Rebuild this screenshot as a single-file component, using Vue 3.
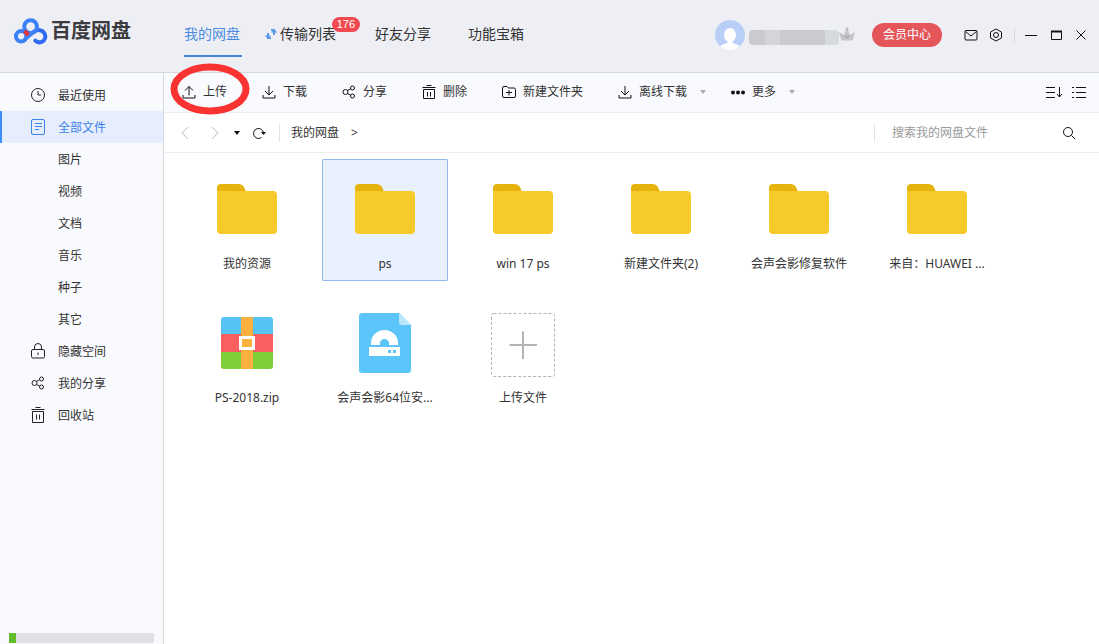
<template>
  <div class="app">
    <header class="header">
      <div class="brand">
        <svg class="brand-logo" viewBox="0 0 34 27" fill="none" stroke-linecap="round">
          <circle cx="7.2" cy="18.3" r="5.2" stroke="#3b80f7" stroke-width="4" />
          <path d="M20.5 13.5C24 11 28.5 12 30.4 15.2C32.3 18.5 31 22.5 27.8 23.8C25.4 24.8 22.8 24.2 21.3 22.6" stroke="#2f6af0" stroke-width="4" />
          <path d="M11.5 20.5L20.5 13.5" stroke="#3b80f7" stroke-width="4" />
          <circle cx="16.6" cy="8.6" r="6.4" stroke="#3b80f7" stroke-width="4" />
          <path d="M10.5 13L14.5 17" stroke="#e5343a" stroke-width="4" stroke-linecap="butt" />
        </svg>
        <span class="brand-name">百度网盘</span>
      </div>

      <nav class="tabs">
        <a href="#" class="tab active">我的网盘</a>
        <a href="#" class="tab tab-transfer">
          <svg class="transfer-icon" viewBox="0 0 12 12" fill="none" stroke="#5b9bea" stroke-width="2">
            <path d="M6 10H3V5M6 2H9V7" />
            <path d="M0 7.500H6L3 11.500ZM6 4.500H12L9 .5Z" fill="#5b9bea" stroke="none" />
          </svg>
          传输列表
          <span class="badge">176</span>
        </a>
        <a href="#" class="tab">好友分享</a>
        <a href="#" class="tab">功能宝箱</a>
      </nav>

      <div class="account">
        <svg class="avatar" viewBox="0 0 30 30">
          <circle cx="15" cy="15" r="15" fill="#b9cff8" />
          <path d="M5 26.200C7 24 10 24 12.500 23V20.500H17.500V23C20 24 23 24 25 26.200A15 15 0 0 1 5 26.200Z" fill="#fff" />
          <ellipse cx="15" cy="15" rx="6" ry="7" fill="#fff" />
        </svg>
        <span class="user-name"></span>
        <svg class="crown" viewBox="0 0 16 16">
          <path d="M2.500 13.500L0 5L5 8L8 1L11 8L16 5L13.500 13.500Z" fill="#c3c5c8" />
          <circle cx="8" cy="2" r="1.500" fill="#b7b9bc" />
          <path d="M5.500 8L8 11L10.500 8" fill="none" stroke="#9fa2a6" />
        </svg>
      </div>
      <button class="vip-button">会员中心</button>

      <div class="window-tools">
        <button class="icon-button" aria-label="消息">
          <svg class="icon" viewBox="0 0 14 14"><path d="M2 2.500H12Q13 2.500 13 3.500V11Q13 12 12 12H2Q1 12 1 11V3.500Q1 2.500 2 2.500ZM1.500 3.500L7 8L12.500 3.500" /></svg>
        </button>
        <button class="icon-button" aria-label="设置">
          <svg class="icon" viewBox="0 0 14 14"><path d="M7 1L12.500 4V10L7 13L1.500 10V4Z" /><circle cx="7" cy="7" r="2.500" /></svg>
        </button>
      </div>
      <div class="window-controls">
        <button class="icon-button" aria-label="最小化">
          <svg class="icon" viewBox="0 0 14 14"><path d="M1 7.500H13" /></svg>
        </button>
        <button class="icon-button" aria-label="最大化">
          <svg class="icon" viewBox="0 0 14 14"><path d="M2.500 3.500H12.500V11.500H2.500Z" /><path d="M2 3.500H13" stroke-width="2" /></svg>
        </button>
        <button class="icon-button" aria-label="关闭">
          <svg class="icon" viewBox="0 0 14 14"><path d="M2.500 2.500L11.500 11.500M11.500 2.500L2.500 11.500" /></svg>
        </button>
      </div>
    </header>

    <div class="body">
      <aside class="sidebar">
        <nav class="side-nav">
          <a
            v-for="item in sideItems"
            :key="item.label"
            href="#"
            class="side-item"
            :class="{ active: item.label === current }"
            @click.prevent="current = item.label"
          >
            <svg class="side-icon" viewBox="0 0 16 16">
              <path v-if="item.icon" :d="icons[item.icon]" />
            </svg>
            <span class="side-label">{{ item.label }}</span>
          </a>
        </nav>
        <div class="quota">
          <div class="quota-used" :style="{ width: usedPercent + '%' }"></div>
        </div>
      </aside>

      <main class="main">
        <div class="toolbar">
          <button
            v-for="action in actions"
            :key="action.label"
            class="action"
            :class="{ dropdown: action.dropdown }"
          >
            <svg class="icon" viewBox="0 0 14 14"><path :d="icons[action.icon]" :class="{ dots: action.icon === 'more' }" /></svg>
            <span>{{ action.label }}</span>
            <svg v-if="action.dropdown" class="caret" viewBox="0 0 6 4"><path d="M0 0H6L3 4Z" /></svg>
            <svg v-if="action.marked" class="marker" viewBox="0 0 82 52">
              <ellipse cx="41" cy="26" rx="36" ry="22" />
            </svg>
          </button>
          <div class="view-tools">
            <button class="icon-button" aria-label="排序">
              <svg class="icon wide" viewBox="0 0 18 14"><path d="M1 2.500H10M1 7.500H10M1 12.500H10M14.500 2V12M12 9L14.500 12L17 9" /></svg>
            </button>
            <button class="icon-button" aria-label="列表">
              <svg class="icon" viewBox="0 0 14 14"><path d="M4 2.500H14M4 7.500H14M4 12.500H14M0 2.500H2M0 7.500H2M0 12.500H2" /></svg>
            </button>
          </div>
        </div>

        <div class="pathbar">
          <div class="history">
            <button class="icon-button faded" aria-label="后退">
              <svg class="icon" viewBox="0 0 14 14"><path d="M10 1L4 7L10 13" /></svg>
            </button>
            <button class="icon-button faded" aria-label="前进">
              <svg class="icon" viewBox="0 0 14 14"><path d="M4 1L10 7L4 13" /></svg>
            </button>
            <button class="icon-button" aria-label="历史">
              <svg class="caret dark" viewBox="0 0 6 4"><path d="M0 0H6L3 4Z" /></svg>
            </button>
            <button class="icon-button" aria-label="刷新">
              <svg class="icon" viewBox="0 0 14 14"><path d="M9.500 11.500A5 5 0 1 1 11.500 7" /><path d="M9 6H14L11.500 9Z" fill="#111" stroke="none" /></svg>
            </button>
          </div>
          <nav class="crumbs">
            <a href="#">我的网盘</a>
            <span>&gt;</span>
          </nav>
          <form class="search" @submit.prevent>
            <input v-model="keyword" type="text" placeholder="搜索我的网盘文件" aria-label="搜索我的网盘文件" />
            <button class="icon-button" aria-label="搜索">
              <svg class="icon" viewBox="0 0 14 14"><circle cx="6" cy="6" r="4.500" /><path d="M9.500 9.500L13 13" /></svg>
            </button>
          </form>
        </div>

        <div class="files">
          <button
            v-for="file in files"
            :key="file.name"
            class="file"
            :class="{ selected: file.name === selected }"
            @click="selected = file.name"
          >
            <svg v-if="file.type === 'folder'" class="file-icon" viewBox="0 0 64 64">
              <path d="M2 14V9Q2 5 6 5H23Q27 5 29 8L31 13V18H2Z" fill="#e6b30c" />
              <path d="M2 12H58Q62 12 62 16V51Q62 55 58 55H6Q2 55 2 51Z" fill="#f7ca2c" />
            </svg>
            <svg v-else-if="file.type === 'zip'" class="file-icon" viewBox="0 0 64 64">
              <path d="M9 4H55Q58 4 58 7V21H6V7Q6 4 9 4Z" fill="#55c4f5" />
              <path d="M6 21H58V39H6Z" fill="#fa5f5f" />
              <path d="M6 39H58V53Q58 56 55 56H9Q6 56 6 53Z" fill="#7fcf3a" />
              <path d="M26 4H38V56H26Z" fill="#fbb040" />
              <path d="M25.500 24.500H38.500V35.500H25.500Z" fill="#fbb040" stroke="#fff" stroke-width="3" />
            </svg>
            <svg v-else-if="file.type === 'disk'" class="file-icon" viewBox="0 0 64 64">
              <path d="M9 0H46L58 12V57Q58 60 55 60H9Q6 60 6 57V3Q6 0 9 0Z" fill="#5bc5fa" />
              <path d="M46 0L58 12H48Q46 12 46 10Z" fill="#b9e6fd" />
              <path d="M18 32V30A13.500 13 0 0 1 45 30V32H36V30A4.500 4 0 0 0 27 30V32Z" fill="#fff" />
              <path d="M16 34H47V43H16Z" fill="#fff" />
              <path d="M35 37H38V40H35ZM40 37H43V40H40Z" fill="#5bc5fa" />
            </svg>
            <svg v-else class="file-icon" viewBox="0 0 64 64" fill="none">
              <rect x=".5" y=".5" width="63" height="63" rx="2" stroke="#b4b4b4" stroke-dasharray="3 2" />
              <path d="M32 18.500V46M18.500 32H46" stroke="#b4b4b4" stroke-width="2" />
            </svg>
            <span class="file-name">{{ file.name }}</span>
          </button>
        </div>
      </main>
    </div>
  </div>
</template>

<script setup>
import { ref } from 'vue';

const current = ref('全部文件');
const selected = ref('ps');
const keyword = ref('');
const usedPercent = ref(5);

const icons = {
  upload: 'M1 10V13H13V10M7 10.500V1.500M3 5.500L7 1.500L11 5.500',
  download: 'M1 10V13H13V10M7 1V10M3 6L7 10L11 6',
  share: 'M1 7A2.500 2.500 0 1 0 6 7A2.500 2.500 0 1 0 1 7M8.500 3A2 2 0 1 0 12.500 3A2 2 0 1 0 8.500 3M8.500 11A2 2 0 1 0 12.500 11A2 2 0 1 0 8.500 11M5.500 5.500L8.700 3.800M5.500 8.500L8.700 10.200',
  trash: 'M4.500 .5H9.500M.5 2.500H13.500M1.500 4.500H12.500V13.500H1.500ZM5.500 7V11.500M8.500 7V11.500',
  newFolder: 'M.5 3Q.5 1.500 2 1.500H5L6.500 3H12Q13.500 3 13.500 4.500V11Q13.500 12.500 12 12.500H2Q.5 12.500 .5 11ZM7 5V10.500M4 7.500H10',
  more: 'M2 7.500H2M7 7.500H7M12 7.500H12',
  clock: 'M1.500 8A6.500 6.500 0 1 0 14.500 8A6.500 6.500 0 1 0 1.500 8M8 4V8H11',
  doc: 'M3 .5H13Q14.500 .5 14.500 2V14Q14.500 15.500 13 15.500H3Q1.500 15.500 1.500 14V2Q1.500 .5 3 .5ZM5 4.500H12M5 7.500H12M5 10.500H9',
  lock: 'M3 6.500H13Q14.500 6.500 14.500 8V13.500Q14.500 15 13 15H3Q1.500 15 1.500 13.500V8Q1.500 6.500 3 6.500ZM4.500 6.500V4A3.500 3.500 0 0 1 11.500 4V6.500M8 9.500V12',
  nodes: 'M2 8A2.500 2.500 0 1 0 7 8A2.500 2.500 0 1 0 2 8M9.500 4A2 2 0 1 0 13.500 4A2 2 0 1 0 9.500 4M9.500 12A2 2 0 1 0 13.500 12A2 2 0 1 0 9.500 12M6.500 6.500L9.700 4.800M6.500 9.500L9.700 11.200',
  bin: 'M5.500 .5H10.500M1.500 2.500H14.500M2.500 4.500H13.500V15.500H2.500ZM6.500 7.500V12.500M9.500 7.500V12.500'
};

const sideItems = [
  { label: '最近使用', icon: 'clock' },
  { label: '全部文件', icon: 'doc' },
  { label: '图片' },
  { label: '视频' },
  { label: '文档' },
  { label: '音乐' },
  { label: '种子' },
  { label: '其它' },
  { label: '隐藏空间', icon: 'lock' },
  { label: '我的分享', icon: 'nodes' },
  { label: '回收站', icon: 'bin' }
];

const actions = [
  { label: '上传', icon: 'upload', marked: true },
  { label: '下载', icon: 'download' },
  { label: '分享', icon: 'share' },
  { label: '删除', icon: 'trash' },
  { label: '新建文件夹', icon: 'newFolder' },
  { label: '离线下载', icon: 'download', dropdown: true },
  { label: '更多', icon: 'more', dropdown: true }
];

const files = [
  { name: '我的资源', type: 'folder' },
  { name: 'ps', type: 'folder' },
  { name: 'win 17 ps', type: 'folder' },
  { name: '新建文件夹(2)', type: 'folder' },
  { name: '会声会影修复软件', type: 'folder' },
  { name: '来自：HUAWEI ...', type: 'folder' },
  { name: 'PS-2018.zip', type: 'zip' },
  { name: '会声会影64位安...', type: 'disk' },
  { name: '上传文件', type: 'upload' }
];
</script>

<style>
body {
  margin: 0;
}
</style>

<style scoped>
.app {
  display: flex;
  flex-direction: column;
  min-height: 100vh;
  background: #fff;
  color: #333;
  font-family: "Noto Sans", "Noto Sans CJK SC", sans-serif;
  font-size: 12px;
  line-height: 18px;
}

button {
  padding: 0;
  border: none;
  background: none;
  color: inherit;
  font: inherit;
  cursor: pointer;
}

a {
  color: inherit;
  text-decoration: none;
}

svg {
  display: block;
  flex: none;
}

.icon {
  width: 14px;
  height: 14px;
  fill: none;
  stroke: #111;
}

.icon.wide {
  width: 18px;
}

.dots {
  stroke-width: 4;
  stroke-linecap: round;
}

.caret {
  width: 6px;
  height: 4px;
  fill: #aaa;
}

.caret.dark {
  fill: #111;
}

.faded .icon {
  stroke: #bbb;
}

.header {
  display: flex;
  align-items: center;
  height: 70px;
  padding: 0 11px 2px 14px;
  border-bottom: 1px solid #d5d8e2;
  background: #eeeff5;
}

.brand {
  display: flex;
  align-items: center;
  gap: 3px;
  width: 170px;
  padding-bottom: 8px;
}

.brand-logo {
  width: 34px;
  height: 27px;
}

.brand-name {
  color: #3c3c40;
  font-size: 20px;
  font-weight: 700;
  line-height: 28px;
}

.tabs {
  display: flex;
  font-size: 14px;
  line-height: 20px;
}

.tab {
  display: flex;
  align-items: center;
  height: 42px;
  margin-right: 37px;
  border-bottom: 2px solid transparent;
}

.tab.active {
  margin-right: 23px;
  padding-right: 2px;
  border-color: #4a86d8;
  color: #4a8be0;
}

.tab.tab-transfer {
  position: relative;
  gap: 3px;
  margin-right: 39px;
}

.transfer-icon {
  width: 12px;
  height: 12px;
}

.badge {
  position: absolute;
  top: 4px;
  right: -24px;
  padding: 0 5px;
  border-radius: 8px;
  background: #f04a50;
  color: #fff;
  font-family: "Liberation Sans", sans-serif;
  font-size: 11px;
  line-height: 15px;
}

.account {
  display: flex;
  align-items: center;
  margin-left: auto;
}

.avatar {
  width: 30px;
  height: 30px;
}

.user-name {
  width: 90px;
  height: 15px;
  margin-top: 4px;
  margin-left: 4px;
  border-radius: 4px;
  background: linear-gradient(90deg, #c9cbce 18%, #d3d5d8 18% 34%, #c9cbce 34% 84%, #d6dade 84%);
}

.crown {
  width: 16px;
  height: 16px;
}

.vip-button {
  height: 24px;
  margin-left: 17px;
  padding: 0 11px;
  border-radius: 12px;
  background: #e4565a;
  color: #fff;
}

.window-tools,
.window-controls {
  display: flex;
}

.window-tools {
  gap: 11px;
  margin-left: 22px;
}

.window-controls {
  gap: 11px;
  margin-left: 11px;
  padding-left: 9px;
  border-left: 1px solid #d6d8de;
}

.body {
  display: flex;
  flex: 1;
}

.sidebar {
  display: flex;
  flex: none;
  flex-direction: column;
  justify-content: space-between;
  width: 163px;
  border-right: 1px solid #d6d8dc;
  background: #f9fafd;
}

.side-nav {
  padding-top: 6px;
}

.side-item {
  display: flex;
  align-items: center;
  gap: 12px;
  height: 32px;
  padding-left: 28px;
  border-left: 2px solid transparent;
}

.side-item.active {
  border-color: #3b8cff;
  background: #e6edfd;
  color: #3b82ec;
}

.side-icon {
  width: 16px;
  height: 16px;
  fill: none;
  stroke: #222;
}

.side-label {
  padding-top: 2px;
}

.active .side-icon {
  stroke: #3b82ec;
}

.quota {
  height: 10px;
  margin: 0 9px 1px;
  background: #dfe0e2;
}

.quota-used {
  height: 100%;
  background: #62bd2c;
}

.main {
  flex: 1;
  min-width: 0;
}

.toolbar {
  display: flex;
  align-items: center;
  gap: 25px;
  height: 38px;
  padding: 0 13px 1px 18px;
  border-bottom: 1px solid #eceef2;
  background: #f9fafd;
}

.action {
  position: relative;
  display: flex;
  align-items: center;
  gap: 7px;
  padding-right: 10px;
}

.action.dropdown {
  padding-right: 0;
}

.action .caret {
  margin-left: 6px;
}

/* hand-drawn ring round the upload button */
.marker {
  position: absolute;
  top: -20px;
  left: -13px;
  width: 82px;
  height: 52px;
  fill: none;
  stroke: #f93232;
  stroke-width: 7;
  pointer-events: none;
}

.view-tools {
  display: flex;
  gap: 9px;
  margin-left: auto;
}

.pathbar {
  display: flex;
  align-items: center;
  height: 38px;
  padding-top: 1px;
  border-bottom: 1px solid #eceef2;
}

.history {
  display: flex;
  align-items: center;
  gap: 12px;
  padding: 2px 13px 2px 14px;
  border-right: 1px solid #e2e4e8;
}

.history .faded + .faded {
  margin-left: 4px;
}

.crumbs {
  display: flex;
  gap: 12px;
  padding-left: 11px;
}

.search {
  display: flex;
  align-items: center;
  width: 201px;
  margin-left: auto;
  padding: 0 23px 0 0;
  border-left: 1px solid #e2e4e8;
}

.search input {
  flex: 1;
  min-width: 0;
  padding: 0 0 0 17px;
  border: none;
  outline: none;
  background: none;
  color: #333;
  font: inherit;
}

.search input::placeholder {
  color: #999;
}

.files {
  display: grid;
  grid-template-columns: repeat(auto-fill, 126px);
  gap: 12px;
  padding: 6px 20px;
}

.file {
  display: flex;
  flex-direction: column;
  align-items: center;
  gap: 12px;
  box-sizing: border-box;
  height: 122px;
  padding-top: 19px;
  border: 1px solid transparent;
  border-radius: 1px;
}

.file.selected {
  border-color: #94b9ee;
  background: #eaf1fe;
}

.file-icon {
  width: 64px;
  height: 64px;
}

.file-name {
  white-space: nowrap;
}
</style>
